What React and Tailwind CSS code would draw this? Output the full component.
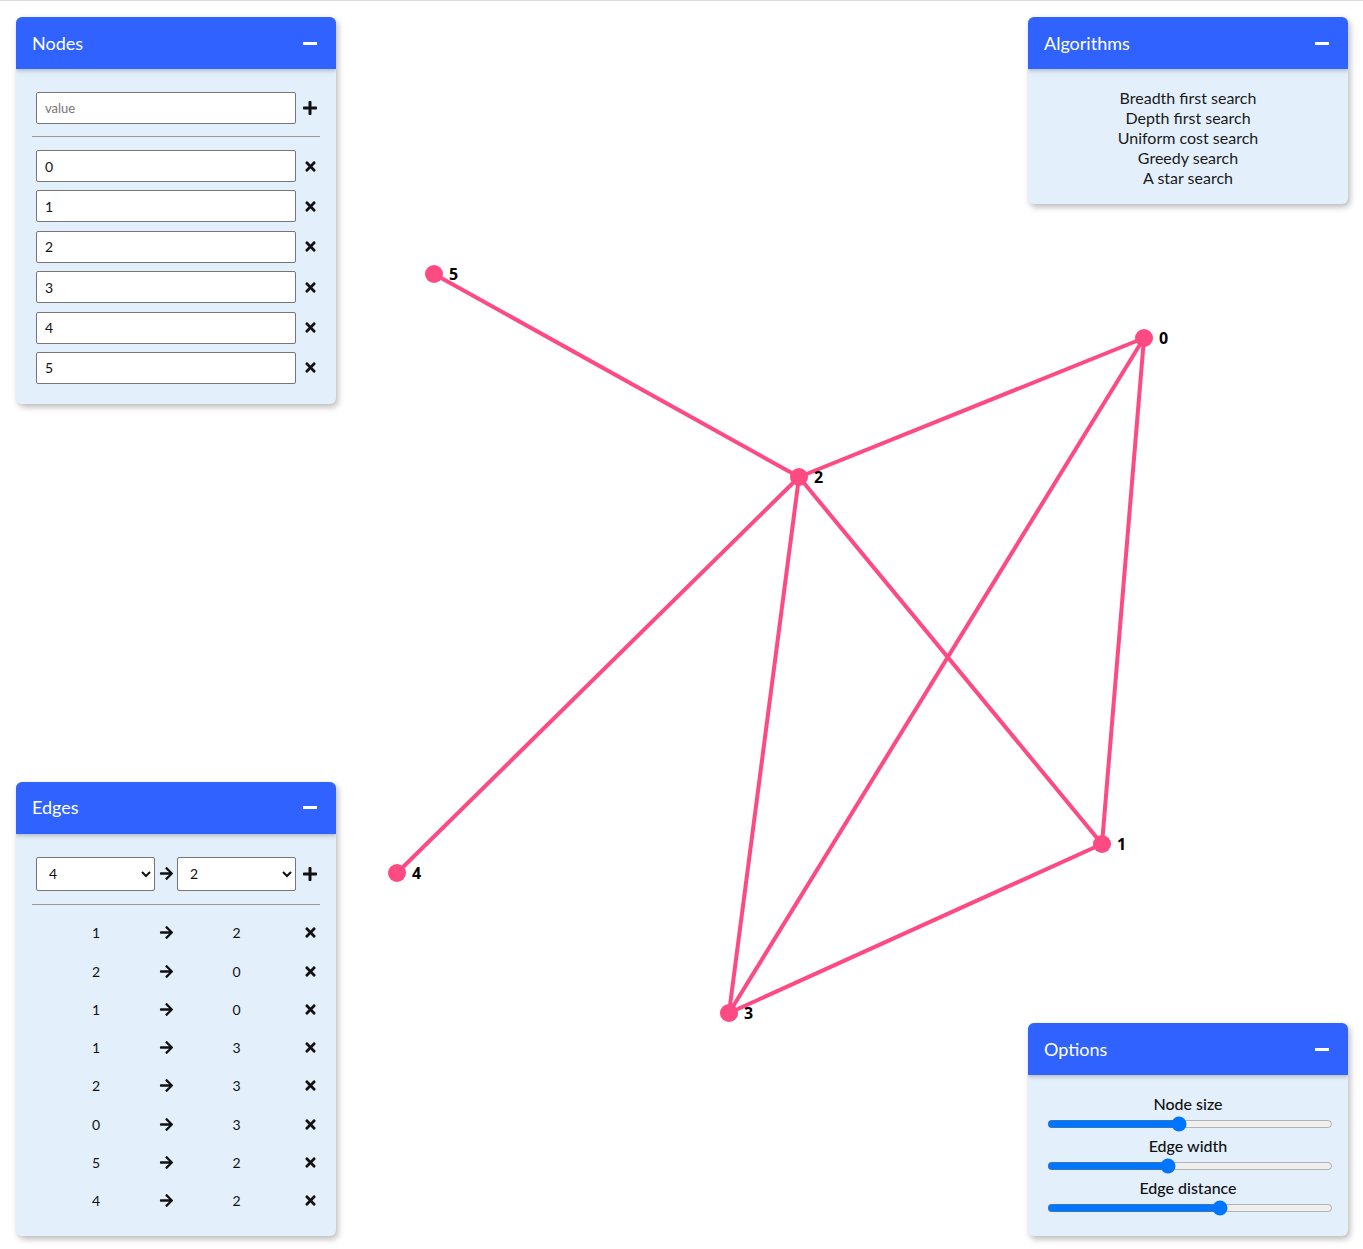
import { FaPlus, FaTimes, FaArrowRight } from "react-icons/fa";

const nodes = [
  { id: 0, x: 1144, y: 338 },
  { id: 1, x: 1102, y: 844 },
  { id: 2, x: 799, y: 477 },
  { id: 3, x: 729, y: 1013 },
  { id: 4, x: 397, y: 873 },
  { id: 5, x: 434, y: 274 },
];

const edges = [
  [1, 2],
  [2, 0],
  [1, 0],
  [1, 3],
  [2, 3],
  [0, 3],
  [5, 2],
  [4, 2],
];

function Panel({ title, children }) {
  return (
    <div className="w-[320px] rounded-md bg-[#e3f0fc] shadow-[2px_3px_6px_rgba(0,0,0,0.28)] overflow-hidden">
      <div className="relative z-10 flex h-[52px] items-center justify-between bg-[#2f62fe] pl-4 pr-[19px] shadow-[0_2px_4px_rgba(0,0,0,0.22)]">
        <span className="text-[18px] text-white">{title}</span>
        <div className="h-[3px] w-[14px] bg-white" />
      </div>
      {children}
    </div>
  );
}

function Graph() {
  const byId = (id) => nodes.find((n) => n.id === id);
  return (
    <svg className="absolute left-0 top-0" width="1363" height="1248" viewBox="0 1 1363 1248">
      {edges.map(([a, b], i) => {
        const p = byId(a);
        const q = byId(b);
        return (
          <line key={i} x1={p.x} y1={p.y} x2={q.x} y2={q.y} stroke="#fe4a83" strokeWidth="4" />
        );
      })}
      {nodes.map((n) => (
        <g key={n.id}>
          <circle cx={n.x} cy={n.y} r="9" fill="#fe4a83" />
          <text x={n.x + 15} y={n.y + 6} fontSize="16" fontWeight="700" fill="#000" fontFamily="Noto Sans, sans-serif">
            {n.id}
          </text>
        </g>
      ))}
    </svg>
  );
}

export default function App() {
  return (
    <div className="relative h-[1249px] w-full overflow-hidden border-t border-[#dcdcdc] bg-white font-['Lato',sans-serif] text-[#111]">
      <Graph />

      <div className="relative flex h-full justify-between pl-4 pr-[15px] pt-4 pb-[13px]">
        {/* left column */}
        <div className="flex flex-col justify-between">
          <Panel title="Nodes">
            <div className="px-4 pt-[23px] pb-5">
              <div className="flex items-center pl-1">
                <input
                  placeholder="value"
                  className="h-8 w-[260px] rounded-[2px] border border-[#767676] bg-white px-2 text-[13px] placeholder:text-[#757575] outline-none"
                />
                <span className="ml-1 flex w-5 justify-center">
                  <FaPlus size={16} />
                </span>
              </div>
              <div className="mt-3 mb-[13px] h-px bg-[#9a9a9a]" />
              <div className="flex flex-col gap-[8.4px]">
                {nodes.map((n) => (
                  <div key={n.id} className="flex items-center pl-1">
                    <input
                      defaultValue={n.id}
                      className="h-8 w-[260px] rounded-[2px] border border-[#767676] bg-white px-2 text-[14px] outline-none"
                    />
                    <span className="ml-1 flex w-5 justify-center">
                      <FaTimes size={15} />
                    </span>
                  </div>
                ))}
              </div>
            </div>
          </Panel>

          <Panel title="Edges">
            <div className="px-4 pt-[23px] pb-4">
              <div className="flex items-center pl-1">
                <select
                  defaultValue="4"
                  className="h-[34px] w-[119px] rounded-[2px] border border-[#767676] bg-white pl-2 text-[14px]"
                >
                  {nodes.map((n) => (
                    <option key={n.id}>{n.id}</option>
                  ))}
                </select>
                <span className="flex w-[22px] justify-center">
                  <FaArrowRight size={15} />
                </span>
                <select
                  defaultValue="2"
                  className="h-[34px] w-[119px] rounded-[2px] border border-[#767676] bg-white pl-2 text-[14px]"
                >
                  {nodes.map((n) => (
                    <option key={n.id}>{n.id}</option>
                  ))}
                </select>
                <span className="ml-1 flex w-5 justify-center">
                  <FaPlus size={16} />
                </span>
              </div>
              <div className="mt-[13px] mb-[9px] h-px bg-[#9a9a9a]" />
              {edges.map(([a, b], i) => (
                <div key={i} className="flex h-[38.3px] items-center text-[14px]">
                  <span className="ml-[29px] w-[70px] text-center">{a}</span>
                  <span className="flex w-[70px] justify-center">
                    <FaArrowRight size={15} />
                  </span>
                  <span className="w-[71px] text-center">{b}</span>
                  <span className="ml-[28px] flex w-5 justify-center">
                    <FaTimes size={15} />
                  </span>
                </div>
              ))}
            </div>
          </Panel>
        </div>

        {/* right column */}
        <div className="flex flex-col justify-between">
          <Panel title="Algorithms">
            <ul className="pt-[19px] pb-4 text-center text-[16px] leading-5 text-[#1a1a1a]">
              <li>Breadth first search</li>
              <li>Depth first search</li>
              <li>Uniform cost search</li>
              <li>Greedy search</li>
              <li>A star search</li>
            </ul>
          </Panel>

          <Panel title="Options">
            <div className="flex flex-col pt-[18px] pb-[17px] text-[16px] font-medium">
              <span className="text-center leading-[22px]">Node size</span>
              <input type="range" defaultValue={46} className="mb-[2px] ml-[19px] h-[18px] w-[286px]" />
              <span className="text-center leading-[22px]">Edge width</span>
              <input type="range" defaultValue={42} className="mb-[2px] ml-[19px] h-[18px] w-[286px]" />
              <span className="text-center leading-[22px]">Edge distance</span>
              <input type="range" defaultValue={61} className="mb-[2px] ml-[19px] h-[18px] w-[286px]" />
            </div>
          </Panel>
        </div>
      </div>
    </div>
  );
}
